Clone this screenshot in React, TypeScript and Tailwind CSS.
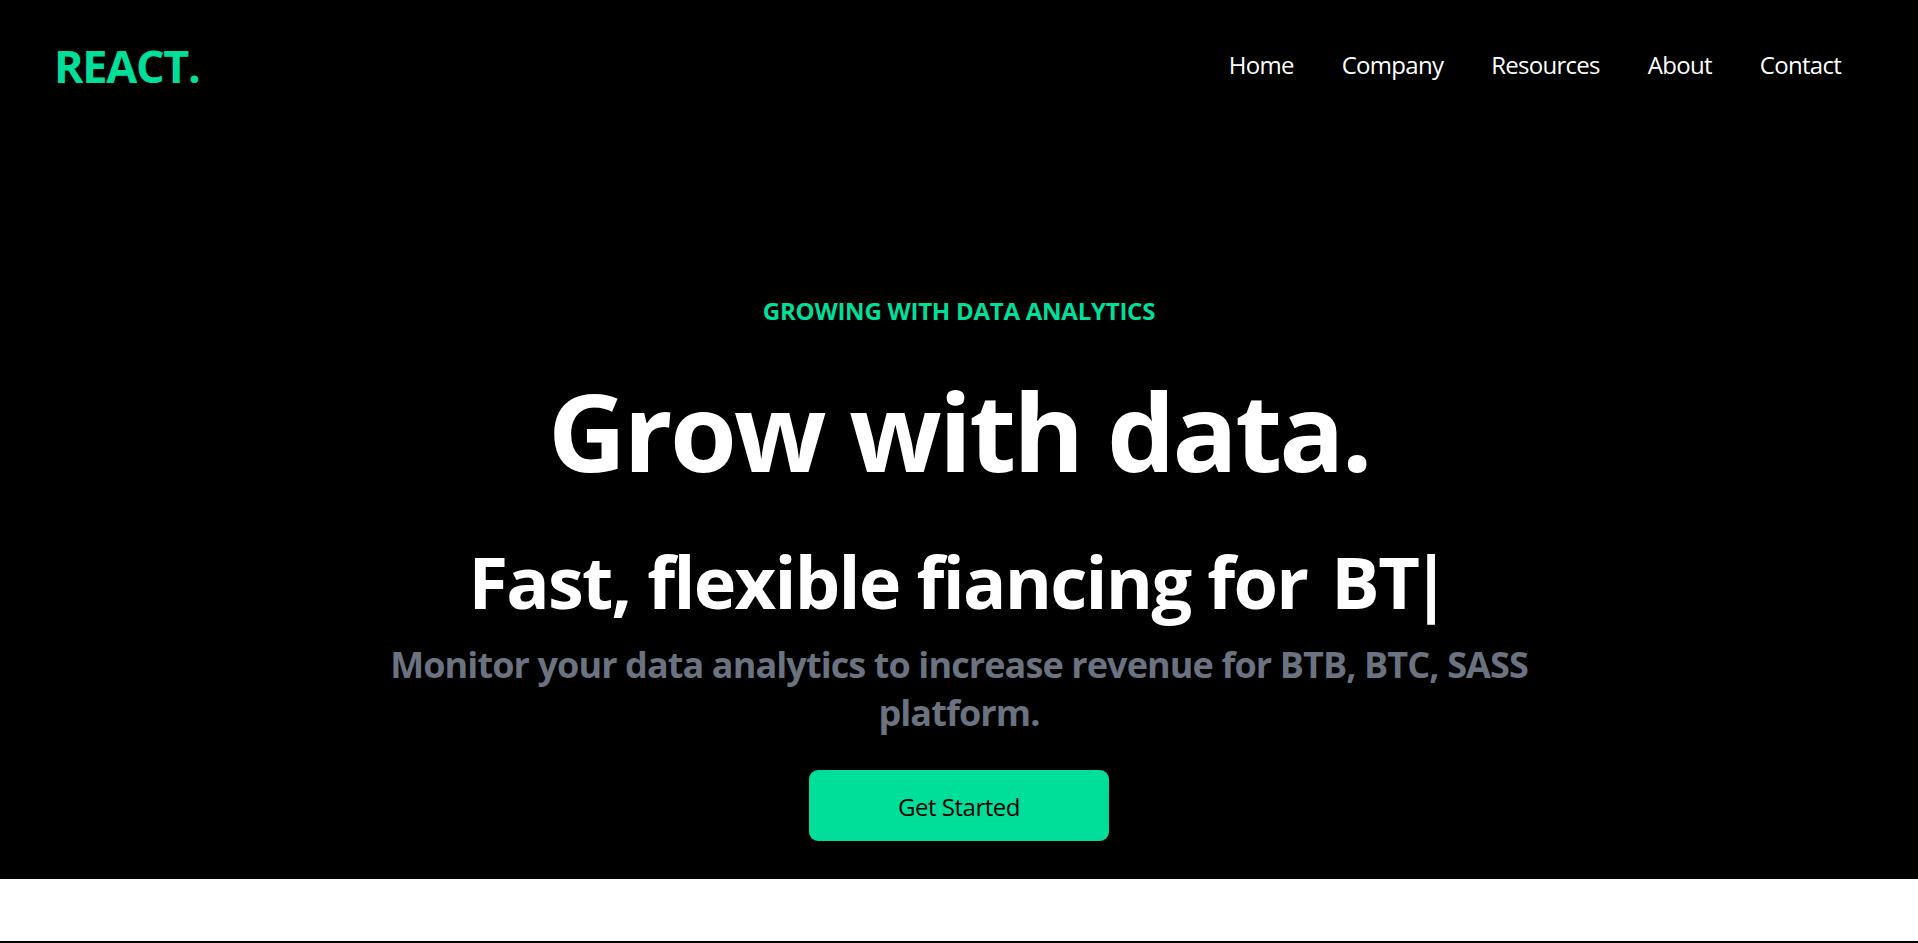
import React from 'react';

const links = ['Home', 'Company', 'Resources', 'About', 'Contact'];

const Navbar: React.FC = () => {
  return (
    <nav className="h-[130px] flex items-center justify-between pl-[54px] pr-[53px] text-white">
      <h1 className="text-[45px] font-bold text-[#00df9a] tracking-[-0.03em] leading-none">REACT.</h1>
      <ul className="flex">
        {links.map(link => (
          <li key={link} className="px-6 text-[24px] tracking-[-0.03em] leading-[36px]">
            {link}
          </li>
        ))}
      </ul>
    </nav>
  );
};

const Hero: React.FC = () => {
  return (
    <section className="flex flex-col items-center text-center text-white pt-[151px]">
      <p className="text-[#00df9a] font-bold text-[24px] leading-[36px] p-3 tracking-[-0.01em]">
        GROWING WITH DATA ANALYTICS
      </p>
      <h1 className="text-[108px] leading-none font-bold py-9 tracking-[-0.025em]">Grow with data.</h1>
      <div className="flex justify-center items-center">
        <p className="text-[72px] leading-none font-bold py-6 tracking-[-0.024em]">Fast, flexible fiancing for</p>
        <span className="text-[72px] leading-none font-bold pl-6 tracking-[-0.02em]">
          B<span className="tracking-[-0.12em]">T</span>|
        </span>
      </div>
      <p className="text-[36px] leading-[48px] font-bold text-[#6b7280] tracking-[-0.025em]">
        Monitor your data analytics to increase revenue for BTB, BTC, SASS
        <br />
        platform.
      </p>
      <button className="w-[300px] h-[71px] pt-[3px] rounded-[9px] bg-[#00df9a] text-black text-[24px] font-medium mt-[33px] mb-[38px] tracking-[-0.02em]">
        Get Started
      </button>
    </section>
  );
};

export default function App() {
  return (
    <div className="min-h-screen bg-white font-['Open_Sans',sans-serif]">
      {/* Dark top area */}
      <div className="bg-black">
        <Navbar />
        <Hero />
      </div>
      <div className="h-[64px] border-b-2 border-black"></div>
    </div>
  );
}
